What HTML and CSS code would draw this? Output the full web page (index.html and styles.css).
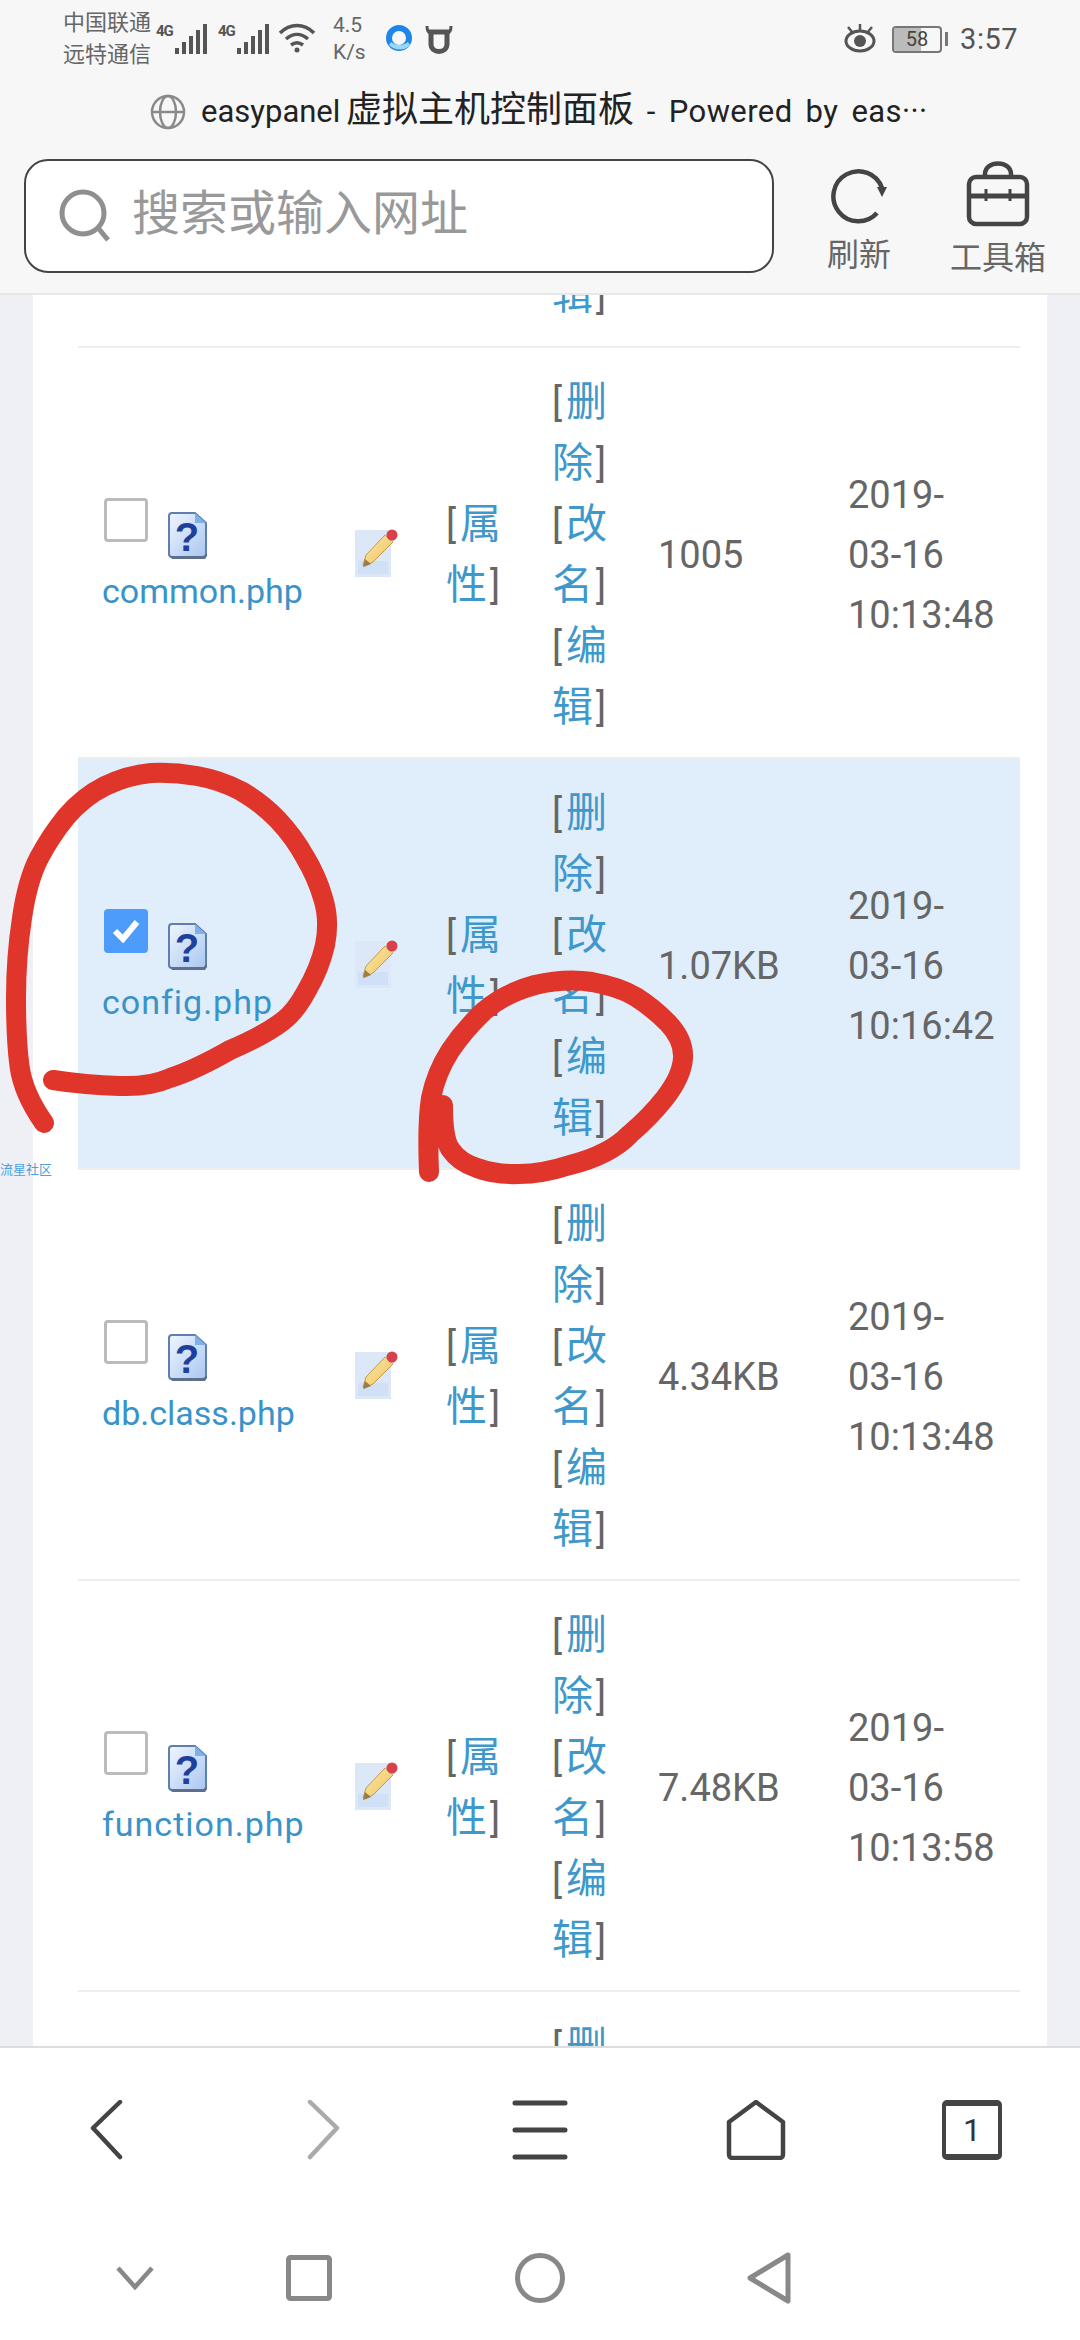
FILE: index.html
```html
<!DOCTYPE html>
<html lang="zh">
<head>
<meta charset="utf-8">
<title>easypanel</title>
<link rel="stylesheet" href="styles.css">
</head>
<body>
<svg class="defs" width="0" height="0">
  <defs>
    <linearGradient id="docFill" x1="0" y1="0" x2="1" y2="1">
      <stop offset="0" stop-color="#f0f6ff"/><stop offset="1" stop-color="#a9c6f0"/>
    </linearGradient>
    <linearGradient id="pencilFill" x1="0" y1="0" x2="1" y2="1">
      <stop offset="0" stop-color="#fbe9a6"/><stop offset="1" stop-color="#eec262"/>
    </linearGradient>
    <symbol id="unknown" viewBox="0 0 41 47">
      <path d="M2 4a3 3 0 0 1 3-3h23l11 10v31a3 3 0 0 1-3 3H5a3 3 0 0 1-3-3z" fill="url(#docFill)" stroke="#5f7fae" stroke-width="2"/>
      <path d="M3 44h34l3-3v3l-2 3H5z" fill="#5c6f8f"/>
      <path d="M28 1v10h11z" fill="#7fb0ea"/>
      <text x="20" y="39" text-anchor="middle" class="qmark">?</text>
    </symbol>
    <symbol id="pencil" viewBox="0 0 43 48">
      <rect x="0" y="1" width="36" height="47" fill="#dce8f8"/>
      <rect x="3" y="32" width="30" height="13" fill="#cfe0f7"/>
      <path d="M10 37l-2 -1 3-10 19-20 8 7-20 20z" fill="url(#pencilFill)" stroke="#c79a4a" stroke-width="1"/>
      <path d="M8 38l2-8 6 5z" fill="#9a7c4a"/>
      <path d="M30 6l8 7 3-4-7-6z" fill="#cfd6e2"/>
      <circle cx="37" cy="6" r="5.500" fill="#d8414a"/>
    </symbol>
    <symbol id="signal" viewBox="0 0 32 30">
      <rect x="0" y="24" width="4" height="6"/><rect x="7" y="18" width="4" height="12"/><rect x="14" y="12" width="4" height="18"/><rect x="21" y="6" width="4" height="24"/><rect x="28" y="0" width="4" height="30"/>
    </symbol>
  </defs>
</svg>

<div class="phone">
  <header class="chrome">
    <div class="status">
      <div class="carriers"><span>中国联通</span><span>远特通信</span></div>
      <span class="net">4G</span>
      <svg class="bars" width="32" height="30"><use href="#signal"/></svg>
      <span class="net net-two">4G</span>
      <svg class="bars" width="32" height="30"><use href="#signal"/></svg>
      <svg class="wifi" width="38" height="32" viewBox="0 0 38 32" fill="none" stroke="#555" stroke-width="3.5">
        <path d="M2 10c10-10 24-10 34 0"/><path d="M8 16c7-6 15-6 22 0"/><path d="M13 22c4-3 8-3 12 0"/>
        <circle cx="19" cy="27" r="2.500" fill="#555" stroke="none"/>
      </svg>
      <div class="speed"><span>4.5</span><span>K/s</span></div>
      <svg class="browser" width="30" height="30" viewBox="0 0 30 30" fill="none">
        <circle cx="15" cy="14" r="10" stroke="#1f86e8" stroke-width="6"/>
        <path d="M5 21c6 6 16 6 21 0l-2-3c-5 4-12 4-17 0z" fill="#9ad7f5"/>
      </svg>
      <svg class="ox" width="32" height="30" viewBox="0 0 30 30" fill="none" stroke="#555" stroke-width="5">
        <path d="M7 9c-3 0-4-3-4-7M23 9c3 0 4-3 4-7" stroke-width="3"/>
        <path d="M7 8h16v12c0 10-16 10-16 0z"/>
      </svg>
      <div class="status-right">
        <svg width="36" height="30" viewBox="0 0 36 30" fill="none" stroke="#555">
          <ellipse cx="18" cy="17" rx="14" ry="10" stroke-width="3"/>
          <circle cx="18" cy="17" r="6" fill="#555" stroke="none"/>
          <path d="M6 3l5 6M18 0v6M30 3l-5 6" stroke-width="2.500"/>
        </svg>
        <div class="battery"><span class="level"></span><span class="pct">58</span></div>
        <span class="tip"></span>
        <span class="clock">3:57</span>
      </div>
    </div>
    <div class="title">
      <svg width="36" height="36" viewBox="0 0 36 36" fill="none" stroke="#8a8a8a" stroke-width="2.500">
        <circle cx="18" cy="18" r="16"/><ellipse cx="18" cy="18" rx="8" ry="16"/><path d="M2 18h32"/>
      </svg>
      <div class="title-text">easypanel <span class="cjk">虚拟主机控制面板</span> <span class="tail">- Powered by eas···</span></div>
    </div>
    <div class="toolbar">
      <div class="search">
        <svg width="52" height="54" viewBox="0 0 52 54" fill="none" stroke="#8f8f8f" stroke-width="5">
          <circle cx="24" cy="24" r="21"/><path d="M40 40l9 11"/>
        </svg>
        <span class="placeholder">搜索或输入网址</span>
      </div>
      <div class="tool tool-refresh">
        <svg width="58" height="58" viewBox="0 0 58 58" fill="none" stroke="#444" stroke-width="4.500">
          <path d="M47 47A25 25 0 1 1 52 22"/>
          <path d="M47 21h10l-5 10z" fill="#444" stroke="none"/>
        </svg>
        <span>刷新</span>
      </div>
      <div class="tool tool-box">
        <svg width="64" height="66" viewBox="0 0 64 66" fill="none" stroke="#444" stroke-width="4.500">
          <path d="M19 17v-4c0-14 26-14 26 0v4"/>
          <rect x="3" y="16" width="58" height="47" rx="7"/>
          <path d="M3 35h58" stroke-width="5"/>
          <path d="M20 28v12M44 28v12" stroke-width="3"/>
        </svg>
        <span>工具箱</span>
      </div>
    </div>
  </header>

  <main class="viewport">
    <div class="sheet">
      <div class="files">
        <div class="row row-top">
          <div></div>
          <div></div>
          <div></div>
          <div class="ops"><a>辑</a><i class="cb">]</i></div>
        </div>
        <div class="row">
          <div class="name"><div class="pick"><span class="check"></span><svg class="doc" width="41" height="47"><use href="#unknown"/></svg></div><a class="file">common.php</a></div>
          <svg class="edit" width="43" height="48"><use href="#pencil"/></svg>
          <div class="ops"><i class="ob">[</i><a>属性</a><i class="cb">]</i></div>
          <div class="ops"><i class="ob">[</i><a>删除</a><i class="cb">]</i> <i class="ob">[</i><a>改名</a><i class="cb">]</i> <i class="ob">[</i><a>编辑</a><i class="cb">]</i></div>
          <div class="size">1005</div>
          <div class="date">2019-<br>03-16<br>10:13:48</div>
        </div>
        <div class="row selected">
          <div class="name"><div class="pick"><span class="check checked"><svg width="28" height="24" viewBox="0 0 28 24" fill="none" stroke="#fff" stroke-width="6"><path d="M3 12l8 8L25 3"/></svg></span><svg class="doc" width="41" height="47"><use href="#unknown"/></svg></div><a class="file wide">config.php</a></div>
          <svg class="edit" width="43" height="48"><use href="#pencil"/></svg>
          <div class="ops"><i class="ob">[</i><a>属性</a><i class="cb">]</i></div>
          <div class="ops"><i class="ob">[</i><a>删除</a><i class="cb">]</i> <i class="ob">[</i><a>改名</a><i class="cb">]</i> <i class="ob">[</i><a>编辑</a><i class="cb">]</i></div>
          <div class="size">1.07KB</div>
          <div class="date">2019-<br>03-16<br>10:16:42</div>
        </div>
        <div class="row">
          <div class="name"><div class="pick"><span class="check"></span><svg class="doc" width="41" height="47"><use href="#unknown"/></svg></div><a class="file">db.class.php</a></div>
          <svg class="edit" width="43" height="48"><use href="#pencil"/></svg>
          <div class="ops"><i class="ob">[</i><a>属性</a><i class="cb">]</i></div>
          <div class="ops"><i class="ob">[</i><a>删除</a><i class="cb">]</i> <i class="ob">[</i><a>改名</a><i class="cb">]</i> <i class="ob">[</i><a>编辑</a><i class="cb">]</i></div>
          <div class="size">4.34KB</div>
          <div class="date">2019-<br>03-16<br>10:13:48</div>
        </div>
        <div class="row">
          <div class="name"><div class="pick"><span class="check"></span><svg class="doc" width="41" height="47"><use href="#unknown"/></svg></div><a class="file wide">function.php</a></div>
          <svg class="edit" width="43" height="48"><use href="#pencil"/></svg>
          <div class="ops"><i class="ob">[</i><a>属性</a><i class="cb">]</i></div>
          <div class="ops"><i class="ob">[</i><a>删除</a><i class="cb">]</i> <i class="ob">[</i><a>改名</a><i class="cb">]</i> <i class="ob">[</i><a>编辑</a><i class="cb">]</i></div>
          <div class="size">7.48KB</div>
          <div class="date">2019-<br>03-16<br>10:13:58</div>
        </div>
        <div class="row row-bottom">
          <div></div>
          <div></div>
          <div></div>
          <div class="ops"><i class="ob">[</i><a>删</a></div>
        </div>
      </div>
    </div>
  </main>

  <nav class="nav">
    <div class="nav-main">
      <svg width="60" height="60" viewBox="0 0 60 60" fill="none" stroke="#444" stroke-width="4.500" stroke-linecap="round" stroke-linejoin="round"><path d="M42 2L15 28l27 29"/></svg>
      <svg width="60" height="60" viewBox="0 0 60 60" fill="none" stroke="#aaa" stroke-width="4.500" stroke-linecap="round" stroke-linejoin="round"><path d="M16 2l27 26-27 29"/></svg>
      <svg width="60" height="60" viewBox="0 0 60 60" fill="none" stroke="#444" stroke-width="5" stroke-linecap="round"><path d="M5 3h50M5 30h50M5 57h50"/></svg>
      <svg width="60" height="60" viewBox="0 0 60 60" fill="none" stroke="#444" stroke-width="4.500" stroke-linejoin="round"><path d="M30 2L3 22v32c0 3 1 4 4 4h46c3 0 4-1 4-4V22z"/></svg>
      <div class="tab-count">1</div>
    </div>
    <div class="nav-system">
      <svg width="40" height="24" viewBox="0 0 40 24" fill="none" stroke="#888" stroke-width="4.500"><path d="M3 2l17 19L37 2"/></svg>
      <svg width="46" height="46" viewBox="0 0 46 46" fill="none" stroke="#888" stroke-width="5"><rect x="2.500" y="2.500" width="41" height="41" rx="2"/></svg>
      <svg width="50" height="50" viewBox="0 0 50 50" fill="none" stroke="#888" stroke-width="5"><circle cx="25" cy="25" r="22.500"/></svg>
      <svg width="44" height="52" viewBox="0 0 44 52" fill="none" stroke="#888" stroke-width="5" stroke-linejoin="round"><path d="M41 3L3 26l38 23z"/></svg>
    </div>
  </nav>

  <span class="watermark">流星社区</span>
  <svg class="scribble" width="1080" height="2340" viewBox="0 0 1080 2340" fill="none" stroke="#e0352b" stroke-width="20" stroke-linecap="round" stroke-linejoin="round">
    <path d="M44 1123Q23 1093 19.500 1066Q16 1040 16 998Q16 957 22 918Q27.500 880 39 858Q50 837 66 817Q83 797 105 786Q128 775 151 773Q174 772 197 776Q220 780 241 791Q262 803 278 820Q294 837 305 857Q317 877 323 898Q330 920 325 945Q320 968 306 992Q295 1012 283 1021Q265 1035 230 1050Q195 1070 170 1078Q150 1087 120 1086Q85 1085 53 1080"/>
    <path d="M429 1172Q427 1123 431 1098Q436 1073 450 1051Q464 1030 484 1011Q505 993 535 985Q565 978 592 982Q620 987 636 997Q652 1007 668 1023Q684 1040 683 1058Q682 1076 665 1098Q650 1117 630 1134Q610 1155 570 1165Q542 1174 519 1174Q496 1175 477 1168Q459 1162 451 1150Q443 1140 443 1105"/>
  </svg>
</div>
</body>
</html>
```

FILE: styles.css
```css
* { box-sizing: border-box; }
html, body { margin: 0; padding: 0; }
body { font-family: Roboto, "Noto Sans CJK SC", sans-serif; background: #fff; }
.defs { position: absolute; }
.qmark { font: 900 40px "Liberation Sans", sans-serif; fill: #1f3f9c; }

.phone { position: relative; width: 1080px; height: 2340px; display: flex; flex-direction: column; overflow: hidden; }

.chrome { height: 295px; flex: none; background: #f7f7f7; border-bottom: 2px solid #e8e8e8; }

.status { height: 78px; display: flex; align-items: center; padding: 0 62px 0 63px; color: #666; }
.carriers { display: flex; flex-direction: column; font-size: 22px; line-height: 32px; width: 93px; }
.net { font-size: 15px; font-weight: 700; width: 19px; align-self: flex-start; margin-top: 22px; color: #555; letter-spacing: -1px; }
.net-two { margin-left: 11px; }
.bars { fill: #555; }
.wifi { margin-left: 9px; }
.speed { display: flex; flex-direction: column; font-size: 21px; line-height: 27px; margin-left: 17px; width: 51px; }
.browser { margin-right: 9px; }
.status-right { margin-left: auto; display: flex; align-items: center; }
.battery { position: relative; width: 50px; height: 27px; border: 2px solid #777; border-radius: 4px; overflow: hidden; margin-left: 14px; }
.level { position: absolute; left: 0; top: 0; bottom: 0; width: 27px; background: #bbb; }
.pct { position: relative; display: block; text-align: center; font-size: 20px; line-height: 23px; color: #444; }
.tip { width: 3px; height: 14px; background: #777; margin-left: 3px; }
.clock { font-size: 29px; color: #555; margin-left: 12px; letter-spacing: .5px; }

.title { height: 68px; display: flex; align-items: center; gap: 15px; padding-left: 150px; }
.title-text { font-size: 31px; line-height: 44px; color: #222; white-space: nowrap; word-spacing: 5px; margin-bottom: 2px; }
.cjk { font-size: 36px; line-height: 44px; margin-left: -7px; }
.tail { letter-spacing: .4px; }

.toolbar { display: flex; align-items: flex-start; padding: 13px 0 0 24px; }
.search { width: 750px; height: 114px; background: #fff; border: 2px solid #444; border-radius: 24px; display: flex; align-items: center; gap: 21px; padding-left: 33px; }
.placeholder { font-size: 48px; line-height: 60px; color: #999; margin-bottom: 5px; }
.tool { display: flex; flex-direction: column; align-items: center; font-size: 32px; line-height: 40px; color: #666; }
.tool-refresh { width: 66px; margin-left: 52px; margin-top: 7px; gap: 11px; }
.tool-box { width: 100px; margin-left: 56px; margin-top: 2px; gap: 11px; }

.viewport { flex: 1; min-height: 0; overflow: hidden; background: #eef0f5; padding: 0 33px; }
.sheet { background: #fff; height: 100%; padding: 0 27px 0 45px; }
.files { font-size: 38px; line-height: 60px; color: #666; }

.row { height: 411px; display: grid; grid-template-columns: 277px 91px 106px 106px 190px 1fr; align-items: center; border-bottom: 2px solid #eee; }
.selected { background: #e0edfb; }
.row-top { height: 53px; overflow: hidden; align-items: start; }
.row-top .ops { margin-top: -30px; }
.row-bottom { height: 55px; overflow: hidden; align-items: start; border-bottom: 0; }
.row-bottom .ops { padding-top: 25px; margin-top: 0; }

.name { padding-left: 26px; display: flex; flex-direction: column; gap: 9px; margin-top: 7px; }
.pick { display: flex; align-items: flex-start; gap: 19px; }
.check { width: 44px; height: 44px; border: 3px solid #bbb; border-radius: 4px; background: #fff; flex: none; display: flex; align-items: center; justify-content: center; }
.checked { background: #4d9bfb; border-color: #4d9bfb; }
.doc { margin-top: 14px; }
.file { font-size: 34px; line-height: 46px; color: #3a93c8; margin-left: -2px; }
.wide { letter-spacing: 1px; }

.ops { width: 64px; margin-top: 4px; }
.ops i { font-style: normal; color: #666; }
.ops a { font-size: 41px; color: #3f98cb; }
.ops .ob { margin-right: 4px; }
.ops .cb { margin-left: 3px; }
.size, .date { white-space: nowrap; margin-top: 4px; }

.nav { height: 294px; flex: none; background: #fff; border-top: 2px solid #ddd; }
.nav-main { display: grid; grid-template-columns: repeat(5, 216px); justify-items: center; padding-top: 52px; }
.tab-count { width: 60px; height: 60px; border: 4px solid #444; border-top-width: 6px; border-bottom-width: 6px; border-radius: 5px; display: flex; align-items: center; justify-content: center; font-size: 32px; color: #333; }
.nav-system { display: grid; grid-template-columns: 270px 78px 384px 74px; justify-items: center; align-items: center; height: 52px; margin-top: 92px; }

.watermark { position: absolute; left: 0; top: 1162px; font-size: 13px; line-height: 16px; color: #4a9fe0; }
.scribble { position: absolute; left: 0; top: 0; pointer-events: none; }
```
